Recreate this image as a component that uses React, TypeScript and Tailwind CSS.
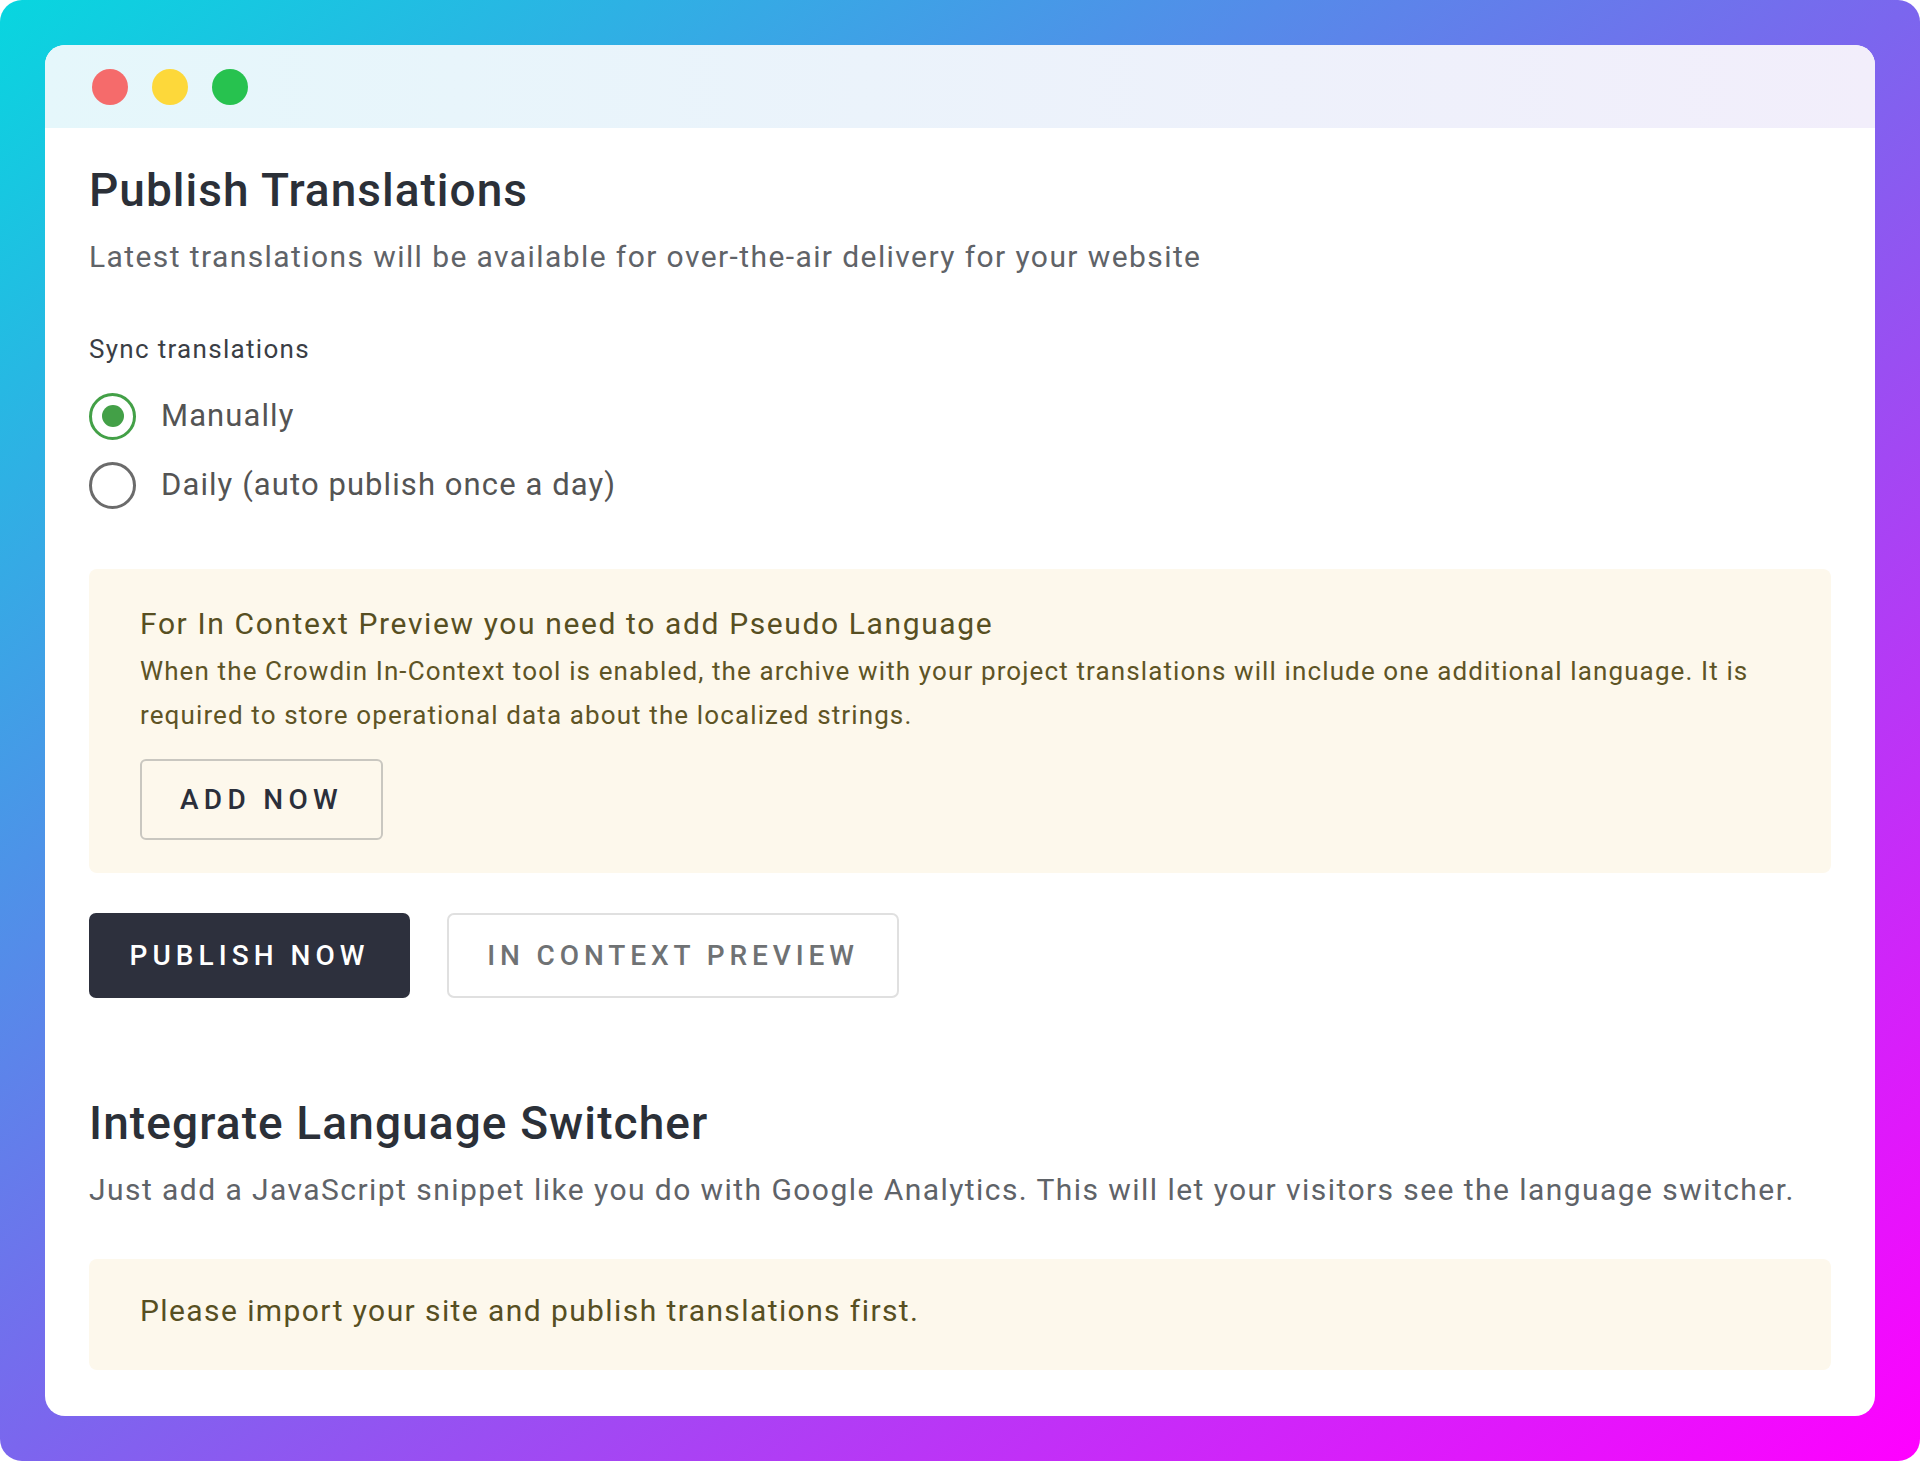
import React from "react";

const font = { fontFamily: "Roboto, 'Noto Sans', sans-serif" };

function Radio({ checked, label }: { checked: boolean; label: string }) {
  return (
    <label className="flex items-center h-[48px] gap-[25px] cursor-pointer">
      {checked ? (
        <span className="w-[47px] h-[47px] rounded-full border-[3px] border-[#43a047] flex items-center justify-center">
          <span className="w-[22px] h-[22px] rounded-full bg-[#43a047]" />
        </span>
      ) : (
        <span className="w-[47px] h-[47px] rounded-full border-[3px] border-[#6b6b6b]" />
      )}
      <span className="text-[31px] tracking-[0.035em] text-[#545454]">{label}</span>
    </label>
  );
}

export default function App() {
  return (
    <div className="w-[1920px] h-[1461px] bg-white" style={font}>
      <div className="w-full h-full rounded-[22px] p-[45px] bg-[linear-gradient(to_bottom_right,#08d6df,#7b66ee_50%,#ff00ff)]">
        <div className="w-full h-full rounded-[20px] bg-white overflow-hidden flex flex-col">
          {/* title bar */}
          <div className="h-[83px] shrink-0 flex items-center gap-[24px] pl-[47px] bg-gradient-to-r from-[#e5f7fb] to-[#f2eefb]">
            <span className="w-[36px] h-[36px] rounded-full bg-[#f56b6b]" />
            <span className="w-[36px] h-[36px] rounded-full bg-[#fdd83a]" />
            <span className="w-[36px] h-[36px] rounded-full bg-[#27c24f]" />
          </div>

          <div className="px-[44px] pt-[34px] flex flex-col">
            <h1 className="text-[46px] leading-[56px] font-medium tracking-[0.022em] text-[#2b3038]">Publish Translations</h1>
            <p className="mt-[19px] text-[30px] leading-[40px] tracking-[0.047em] text-[#5f6368]">
              Latest translations will be available for over-the-air delivery for your website
            </p>

            <div className="mt-[56px] text-[26px] leading-[32px] tracking-[0.05em] text-[#3a3e45]">Sync translations</div>
            <div className="mt-[27px] flex flex-col gap-[21px]">
              <Radio checked label="Manually" />
              <Radio checked={false} label="Daily (auto publish once a day)" />
            </div>

            <div className="mt-[60px] rounded-[8px] bg-[#fdf8ec] pl-[51px] pr-[40px] pt-[35px] pb-[33px]">
              <div className="text-[30px] leading-[40px] tracking-[0.054em] text-[#574f22]">
                For In Context Preview you need to add Pseudo Language
              </div>
              <p className="mt-[5px] text-[26px] leading-[44px] tracking-[0.043em] text-[#5e5425] whitespace-nowrap">
                When the Crowdin In-Context tool is enabled, the archive with your project translations will include one additional language. It is
                <br />
                required to store operational data about the localized strings.
              </p>
              <button className="mt-[22px] w-[243px] h-[81px] rounded-[6px] border-2 border-[#c9c7c0] text-[28px] font-medium tracking-[0.19em] text-[#2b2f3a]">
                ADD NOW
              </button>
            </div>

            <div className="mt-[40px] flex gap-[37px]">
              <button className="w-[321px] h-[85px] rounded-[7px] bg-[#2d303d] text-white text-[28px] font-medium tracking-[0.18em]">
                PUBLISH NOW
              </button>
              <button className="w-[452px] h-[85px] rounded-[7px] border-2 border-[#e0e0e0] bg-white text-[#6f7274] text-[28px] font-medium tracking-[0.175em]">
                IN CONTEXT PREVIEW
              </button>
            </div>

            <h2 className="mt-[97px] text-[46px] leading-[56px] font-medium tracking-[0.024em] text-[#2b3038]">Integrate Language Switcher</h2>
            <p className="mt-[19px] text-[30px] leading-[40px] tracking-[0.048em] text-[#5f6368]">
              Just add a JavaScript snippet like you do with Google Analytics. This will let your visitors see the language switcher.
            </p>

            <div className="mt-[49px] h-[111px] rounded-[8px] bg-[#fdf8ec] pl-[51px] pb-[8px] flex items-center">
              <span className="text-[30px] tracking-[0.047em] text-[#574f22]">Please import your site and publish translations first.</span>
            </div>
          </div>
        </div>
      </div>
    </div>
  );
}
